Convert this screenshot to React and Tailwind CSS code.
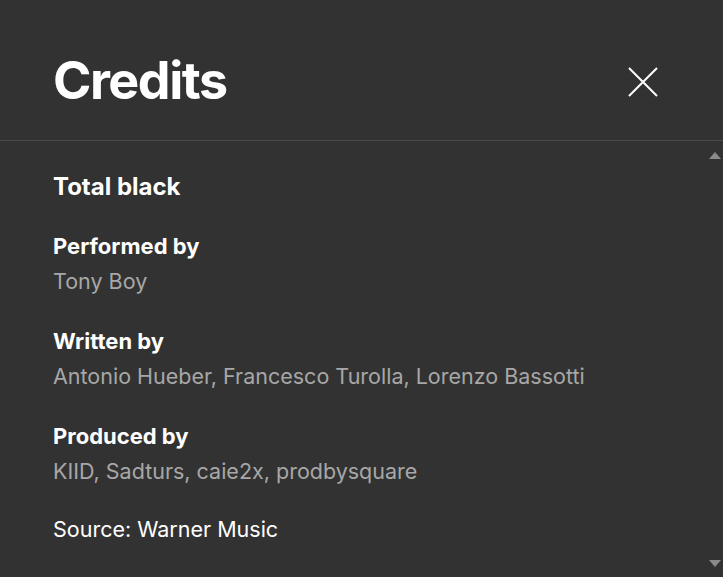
const credits = [
  { role: "Performed by", names: "Tony Boy" },
  { role: "Written by", names: "Antonio Hueber, Francesco Turolla, Lorenzo Bassotti" },
  { role: "Produced by", names: "KIID, Sadturs, caie2x, prodbysquare" },
];

export default function App() {
  return (
    <div className="w-[723px] h-[577px] bg-[#323232] flex flex-col font-['Inter',sans-serif] overflow-hidden">
      <div className="h-[141px] shrink-0 flex items-center justify-between pl-[53px] pr-[65px] border-b border-[#4a4a4a]">
        <h1 className="text-white text-[52px] font-bold tracking-[-1.5px] leading-none pt-[22px]">Credits</h1>
        <button className="w-[30px] h-[30px] text-white mt-[24px]">
          <svg viewBox="0 0 30 30" width="30" height="30" fill="none" stroke="currentColor" strokeWidth="2">
            <path d="M1 1 L29 29 M29 1 L1 29" />
          </svg>
        </button>
      </div>
      <div className="flex flex-1 min-h-0">
        <div className="flex-1 pl-[53px] pt-[32px]">
          <h2 className="text-white text-[24px] font-bold leading-[28px]">Total black</h2>
          {credits.map((c, i) => (
            <div key={c.role} className={i === 0 ? "mt-[31px]" : "mt-[32px]"}>
              <div className="text-white text-[22px] font-bold leading-[28px]">{c.role}</div>
              <div className="text-[#a7a7a7] text-[21.5px] leading-[28px] mt-[7px]">{c.names}</div>
            </div>
          ))}
          <div className="text-white text-[21.5px] leading-[28px] mt-[30px]">Source: Warner Music</div>
        </div>
        <div className="w-[17px] flex flex-col justify-between items-center pt-[11px] pb-[10px]">
          <svg width="12" height="7" viewBox="0 0 12 7"><path d="M6 0 L12 7 L0 7 Z" fill="#8a8a8a" /></svg>
          <svg width="12" height="7" viewBox="0 0 12 7"><path d="M0 0 L12 0 L6 7 Z" fill="#8a8a8a" /></svg>
        </div>
      </div>
    </div>
  );
}
